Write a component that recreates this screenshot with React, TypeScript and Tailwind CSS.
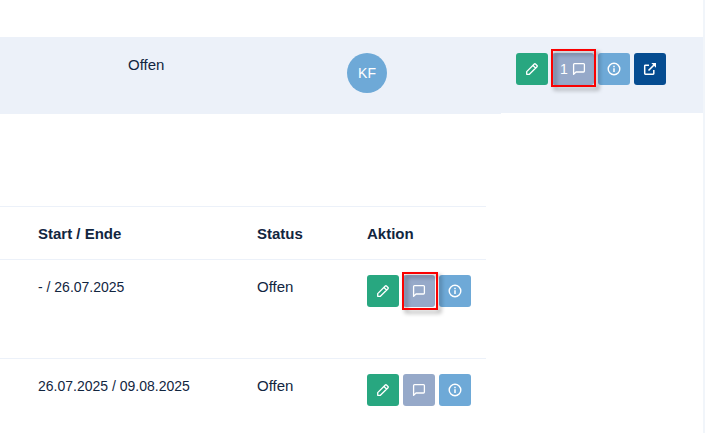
import type { ReactNode } from "react";
import clsx from "clsx";

type Task = { range: string; status: string; marked?: boolean };

const TASKS: Task[] = [
  { range: "- / 26.07.2025", status: "Offen", marked: true },
  { range: "26.07.2025 / 09.08.2025", status: "Offen" },
];

const BUTTON_BASE = "flex h-8 items-center justify-center rounded-[3px] text-white";

function Icon({ children }: { children: ReactNode }) {
  return (
    <svg
      viewBox="0 0 14 14"
      className="size-3.5 shrink-0"
      fill="none"
      stroke="currentColor"
      strokeWidth="1.4"
      strokeLinejoin="round"
      aria-hidden="true"
    >
      {children}
    </svg>
  );
}

const PencilIcon = () => (
  <Icon>
    <path d="M1.7 12.3V9.6L9.3 2q.6-.6 1.2 0L12 3.5q.6.6 0 1.2L4.4 12.3zM8 3.5 10.5 6" strokeWidth="1.3" />
  </Icon>
);

const MessageIcon = () => (
  <Icon>
    <path d="M1.6 12.4V2.6q0-.9.9-.9h9q.9 0 .9.9v6.5q0 .9-.9.9H4z" strokeWidth="1.3" />
  </Icon>
);

const InfoIcon = () => (
  <Icon>
    <circle cx="7" cy="7" r="5.8" />
    <path d="M7 6.3v3.8M7 3.8v1.5" strokeWidth="1.5" />
  </Icon>
);

const ExternalIcon = () => (
  <Icon>
    <path d="M6 3.2H2.4q-.7 0-.7.7v7.7q0 .7.7.7h7.7q.7 0 .7-.7V8" strokeWidth="1.5" />
    <path d="M5.5 8.5 11.5 2.5" strokeWidth="1.6" />
    <path d="M8.3 1H13v4.7z" fill="currentColor" stroke="none" />
  </Icon>
);

type ButtonProps = { label: string; className: string; children: ReactNode };

function ActionButton({ label, className, children }: ButtonProps) {
  return (
    <button type="button" aria-label={label} className={clsx(BUTTON_BASE, className)}>
      {children}
    </button>
  );
}

// Red frame laid over a button to point it out
function Marker({ className }: { className: string }) {
  return (
    <span
      className={clsx(
        "pointer-events-none absolute z-10 border-2 border-[#fa0000] drop-shadow-[3px_3px_2px_rgba(0,0,0,0.4)]",
        className
      )}
    />
  );
}

function Actions({ comments, marker, external }: { comments?: number; marker?: string; external?: boolean }) {
  return (
    <div className="flex gap-1">
      <ActionButton label="Bearbeiten" className="w-8 bg-[#28a780]">
        <PencilIcon />
      </ActionButton>
      <div className="relative">
        <ActionButton
          label="Kommentare"
          className={clsx("gap-1 bg-[#96a9c9] text-sm", comments ? "w-[42px]" : "w-8")}
        >
          {comments && <span>{comments}</span>}
          <MessageIcon />
        </ActionButton>
        {marker && <Marker className={marker} />}
      </div>
      <ActionButton label="Details" className="w-8 bg-[#6ea9d7]">
        <InfoIcon />
      </ActionButton>
      {external && (
        <a href="#" aria-label="Öffnen" className={clsx(BUTTON_BASE, "w-8 bg-[#054c91]")}>
          <ExternalIcon />
        </a>
      )}
    </div>
  );
}

export default function App() {
  return (
    <div className="min-h-screen bg-white font-['Liberation_Sans',Arial,sans-serif] text-[15px] leading-6 text-[#12263f]">
      <div className="min-h-screen border-r-2 border-[#f1f5fa] pt-[37px]">
        <table className="w-full table-fixed border-separate border-spacing-0">
          <tbody>
            <tr className="h-[77px] align-top">
              <td className="w-[347px] bg-[#ecf1f9] pt-4 pl-32">Offen</td>
              <td className="w-[154px] bg-[#ecf1f9] pt-4">
                <div className="flex size-10 items-center justify-center rounded-full bg-[#6ea9d7] text-sm text-white">
                  KF
                </div>
              </td>
              <td className="border-b border-white bg-[#ecf1f9] pt-4 pl-[15px]">
                <Actions comments={1} marker="-top-1 -right-0.5 -bottom-0.5 -left-px" external />
              </td>
            </tr>
          </tbody>
        </table>

        <div className="mt-[92px] pr-[217px]">
          <table className="w-full table-fixed border-separate border-spacing-0">
            <thead>
              <tr className="h-[54px] text-left">
                <th className="w-[257px] border-y border-[#ecf1f9] pt-0.5 pl-[38px]">Start / Ende</th>
                <th className="w-[110px] border-y border-[#ecf1f9] pt-0.5">Status</th>
                <th className="border-y border-[#ecf1f9] pt-0.5">Aktion</th>
              </tr>
            </thead>
            <tbody>
              {TASKS.map((task) => (
                <tr key={task.range} className="group h-[99px] align-top last:h-[73px]">
                  <td className="border-b border-[#ecf1f9] pt-[15px] pl-[38px] text-sm leading-6 group-last:border-b-0">
                    {task.range}
                  </td>
                  <td className="border-b border-[#ecf1f9] pt-[15px] group-last:border-b-0">{task.status}</td>
                  <td className="border-b border-[#ecf1f9] pt-[15px] group-last:border-b-0">
                    <Actions marker={task.marked ? "-top-[3px] -right-[3px] -bottom-[3px] -left-px" : undefined} />
                  </td>
                </tr>
              ))}
            </tbody>
          </table>
        </div>
      </div>
    </div>
  );
}
